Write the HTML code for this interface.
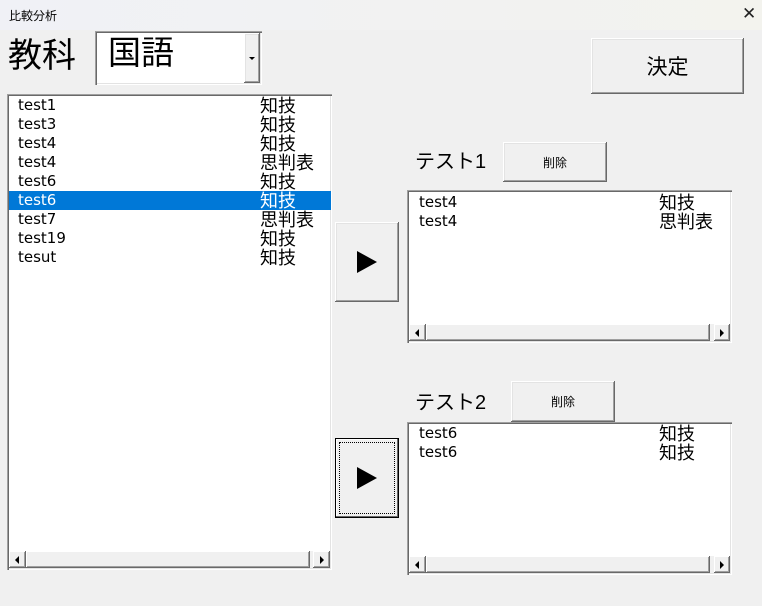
<!DOCTYPE html>
<html><head><meta charset="utf-8"><style>
*{margin:0;padding:0;box-sizing:border-box}
body{width:762px;height:606px;background:#f0f0f0;position:relative;overflow:hidden;font-family:"Liberation Sans","Noto Sans CJK JP",sans-serif;color:#000}
.a{position:absolute}
.title{left:0;top:0;width:762px;height:30px;background:linear-gradient(90deg,#f0f1f6,#f3f3ee)}
.btn{position:absolute;background:#f0f0f0;box-shadow:inset -1px -1px #696969,inset 1px 1px #fff,inset -2px -2px #a0a0a0,inset 2px 2px #e3e3e3;display:flex;align-items:center;justify-content:center}
.sunk{position:absolute;background:#fff;box-shadow:inset 1px 1px #a0a0a0,inset 2px 2px #696969,inset -1px -1px #fff,inset -2px -2px #e3e3e3}
.row{position:absolute;height:19px;font-size:15px;line-height:19px;white-space:nowrap;font-family:"DejaVu Sans","Noto Sans CJK JP",sans-serif}
.row.j{font-size:18px;font-family:"Noto Sans CJK JP",sans-serif;line-height:19px}
.sb{position:absolute;height:17px;background:#f0f0f0}
.sbb{position:absolute;top:0;height:17px;box-shadow:inset -1px -1px #696969,inset 1px 1px #fff,inset -2px -2px #a0a0a0;background:#f0f0f0}
.tri{position:absolute;top:5px;width:0;height:0;border-top:4px solid transparent;border-bottom:4px solid transparent}
.play{width:0;height:0;border-top:11px solid transparent;border-bottom:11px solid transparent;border-left:20px solid #000}
</style></head><body>
<div class="a title"></div>
<div class="a" style="left:9px;top:7px;font-size:12px">比較分析</div>
<div class="a" style="left:742px;top:4px;font-size:17px;font-weight:300;color:#222">✕</div>

<div class="a" style="left:8px;top:34px;font-size:34px;line-height:44px">教科</div>
<div class="sunk" style="left:95px;top:31px;width:167px;height:54px"></div>
<div class="a" style="left:108px;top:32px;font-size:33px;line-height:42px">国語</div>
<div class="btn" style="left:244px;top:33px;width:16px;height:50px"><div style="width:0;height:0;border-left:3px solid transparent;border-right:3px solid transparent;border-top:3px solid #000"></div></div>

<div class="btn" style="left:591px;top:38px;width:153px;height:56px;font-size:21px">決定</div>

<!-- left list -->
<div class="sunk" style="left:7px;top:94px;width:325px;height:476px"></div>
<div class="a" style="left:9px;top:191px;width:322px;height:19px;background:#0078d7"></div>
<div class="row" style="left:18px;top:96px">test1</div><div class="row j" style="left:260px;top:96px">知技</div>
<div class="row" style="left:18px;top:115px">test3</div><div class="row j" style="left:260px;top:115px">知技</div>
<div class="row" style="left:18px;top:134px">test4</div><div class="row j" style="left:260px;top:134px">知技</div>
<div class="row" style="left:18px;top:153px">test4</div><div class="row j" style="left:260px;top:153px">思判表</div>
<div class="row" style="left:18px;top:172px">test6</div><div class="row j" style="left:260px;top:172px">知技</div>
<div class="row" style="left:18px;top:191px;color:#fff">test6</div><div class="row j" style="left:260px;top:191px;color:#fff">知技</div>
<div class="row" style="left:18px;top:210px">test7</div><div class="row j" style="left:260px;top:210px">思判表</div>
<div class="row" style="left:18px;top:229px">test19</div><div class="row j" style="left:260px;top:229px">知技</div>
<div class="row" style="left:18px;top:248px">tesut</div><div class="row j" style="left:260px;top:248px">知技</div>
<div class="sb" style="left:9px;top:551px;width:321px">
 <div class="sbb" style="left:0;width:17px"><div class="tri" style="left:6px;border-right:4px solid #000"></div></div>
 <div class="sbb" style="left:17px;width:284px"></div>
 <div class="sbb" style="left:304px;width:17px"><div class="tri" style="left:7px;border-left:4px solid #000"></div></div>
</div>

<div class="btn" style="left:335px;top:222px;width:64px;height:80px"><div class="play"></div></div>
<div class="a" style="left:335px;top:438px;width:64px;height:80px;border:1px solid #000;background:#f0f0f0;box-shadow:inset -1px -1px #696969,inset 1px 1px #fff"></div>
<div class="a" style="left:339px;top:442px;width:56px;height:72px;border:1px dotted #000;display:flex;align-items:center;justify-content:center"><div class="play"></div></div>

<!-- test1 -->
<div class="a" style="left:415px;top:148px;font-size:20px;line-height:28px">テスト1</div>
<div class="btn" style="left:503px;top:142px;width:104px;height:40px;font-size:12px">削除</div>
<div class="sunk" style="left:407px;top:190px;width:325px;height:153px"></div>
<div class="row" style="left:419px;top:193px">test4</div><div class="row j" style="left:659px;top:193px">知技</div>
<div class="row" style="left:419px;top:212px">test4</div><div class="row j" style="left:659px;top:212px">思判表</div>
<div class="sb" style="left:409px;top:324px;width:321px">
 <div class="sbb" style="left:0;width:17px"><div class="tri" style="left:6px;border-right:4px solid #000"></div></div>
 <div class="sbb" style="left:17px;width:284px"></div>
 <div class="sbb" style="left:305px;width:16px"><div class="tri" style="left:6px;border-left:4px solid #000"></div></div>
</div>

<!-- test2 -->
<div class="a" style="left:415px;top:389px;font-size:20px;line-height:28px">テスト2</div>
<div class="btn" style="left:511px;top:381px;width:104px;height:41px;font-size:12px">削除</div>
<div class="sunk" style="left:407px;top:422px;width:325px;height:153px"></div>
<div class="row" style="left:419px;top:424px">test6</div><div class="row j" style="left:659px;top:424px">知技</div>
<div class="row" style="left:419px;top:443px">test6</div><div class="row j" style="left:659px;top:443px">知技</div>
<div class="sb" style="left:409px;top:556px;width:321px">
 <div class="sbb" style="left:0;width:17px"><div class="tri" style="left:6px;border-right:4px solid #000"></div></div>
 <div class="sbb" style="left:17px;width:284px"></div>
 <div class="sbb" style="left:305px;width:16px"><div class="tri" style="left:6px;border-left:4px solid #000"></div></div>
</div>
</body></html>
